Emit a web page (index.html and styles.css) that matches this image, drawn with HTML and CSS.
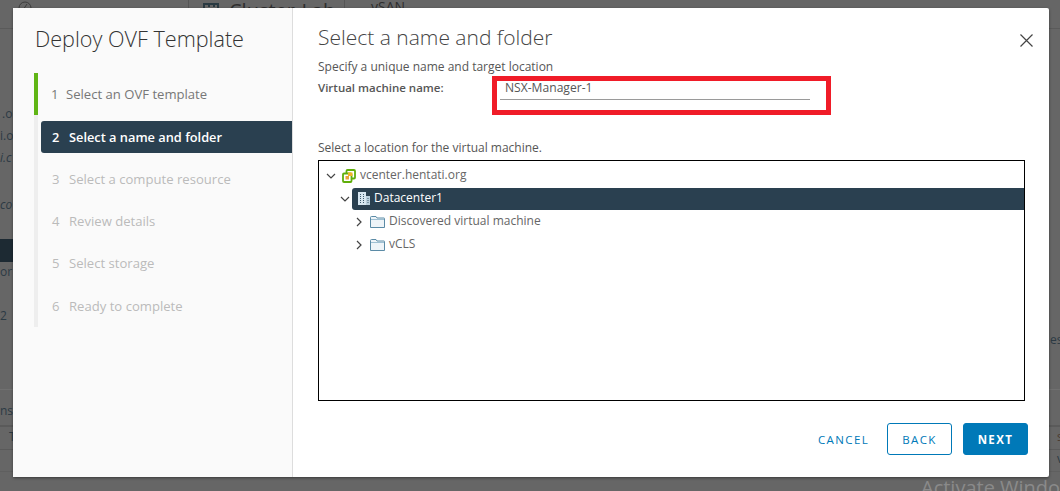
FILE: index.html
```html
<!DOCTYPE html>
<html lang="en">
<head>
<meta charset="utf-8">
<title>Deploy OVF Template</title>
<link rel="stylesheet" href="styles.css">
</head>
<body>
<div class="backdrop">
  <div class="bg-line bg-line-top"></div>
  <div class="bg-vline v1"></div>
  <div class="bg-vline v2"></div>
  <svg class="bg-globe" width="14" height="10" viewBox="0 0 14 10"><path d="M1 7a6 6 0 1 1 12 0M5 9l4-6" fill="none" stroke="#3d3d3d"/></svg>
  <svg class="bg-building" width="16" height="6" viewBox="0 0 16 6"><path d="M1 6V1h14v5M5 3h2M10 3h2" fill="none" stroke="#2a3a42" stroke-width="2"/></svg>
  <span class="bg-title">Cluster-Lab</span>
  <span class="bg-title-b">vSAN</span>
  <span class="bg-frag f1">.or</span>
  <span class="bg-frag f2">i.o</span>
  <span class="bg-frag f3">i.c</span>
  <span class="bg-frag f4">co</span>
  <div class="bg-dark"></div>
  <span class="bg-frag f5">or</span>
  <span class="bg-frag f6">2</span>
  <span class="bg-frag f7">ns</span>
  <span class="bg-frag f8">T</span>
  <div class="bg-line bg-line-a"></div>
  <div class="bg-line bg-line-b"></div>
  <div class="bg-line bg-line-c"></div>
  <div class="bg-line bg-line-d"></div>
  <span class="bg-frag f9">es</span>
  <span class="bg-frag f10">s</span>
  <span class="bg-frag f11">v</span>
  <span class="activate">Activate Windows</span>
</div>

<main class="modal">
  <aside class="sidebar">
    <h1 class="wizard-title">Deploy OVF Template</h1>
    <ol class="steps">
      <li class="step done"><span class="num">1</span><span>Select an OVF template</span></li>
      <li class="step active"><span class="num">2</span><span>Select a name and folder</span></li>
      <li class="step"><span class="num">3</span><span>Select a compute resource</span></li>
      <li class="step"><span class="num">4</span><span>Review details</span></li>
      <li class="step"><span class="num">5</span><span>Select storage</span></li>
      <li class="step"><span class="num">6</span><span>Ready to complete</span></li>
    </ol>
  </aside>
  <section class="content">
    <header class="content-head">
      <h2 class="content-title">Select a name and folder</h2>
      <button class="close" aria-label="Close">
        <svg width="13" height="13" viewBox="0 0 13 13"><path d="M.5.5l12 12M12.5.5l-12 12" stroke="#444" stroke-width="1.2" fill="none"/></svg>
      </button>
    </header>
    <p class="lead">Specify a unique name and target location</p>
    <div class="name-row">
      <label class="name-label">Virtual machine name:</label>
      <div class="name-field">
        <div class="name-value">NSX-Manager-1</div>
      </div>
      <div class="highlight"></div>
    </div>
    <p class="location">Select a location for the virtual machine.</p>
    <div class="tree">
      <div class="node lvl0">
        <svg class="chev" width="10" height="10" viewBox="0 0 10 10"><path d="M1 3l4 4 4-4" fill="none" stroke="#444" stroke-width="1.2"/></svg>
        <svg class="ico" width="14" height="14" viewBox="0 0 14 14"><rect x="4.5" y="1" width="8.5" height="8.5" rx="1" fill="#fff" stroke="#5fae0a" stroke-width="1.8"/><rect x="1" y="4.5" width="8.5" height="8.5" rx="1" fill="#fff" stroke="#5fae0a" stroke-width="1.8"/><rect x="6" y="3.5" width="4.5" height="3.5" fill="#f0b429"/><rect x="3.5" y="7" width="3.5" height="3.5" fill="#e8a33a"/></svg>
        <span class="node-text">vcenter.hentati.org</span>
      </div>
      <div class="node lvl1">
        <svg class="chev" width="10" height="10" viewBox="0 0 10 10"><path d="M1 3l4 4 4-4" fill="none" stroke="#444" stroke-width="1.2"/></svg>
        <div class="selected">
          <svg class="ico" width="12" height="13" viewBox="0 0 12 13"><rect x="0" y="0" width="8" height="13" fill="#d7e6f0"/><rect x="8" y="4" width="4" height="9" fill="#b9cfdd"/><path d="M2 2.5h1M5 2.5h1M2 4.5h1M5 4.5h1M2 6.5h1M5 6.5h1M2 8.5h1M5 8.5h1M2 10.5h1M5 10.5h1M9.5 6.5h1M9.5 8.5h1M9.5 10.5h1" stroke="#3d5a6c"/></svg>
          <span class="node-text">Datacenter1</span>
        </div>
      </div>
      <div class="node lvl2">
        <svg class="chev" width="10" height="10" viewBox="0 0 10 10"><path d="M3 1l4 4-4 4" fill="none" stroke="#444" stroke-width="1.2"/></svg>
        <svg class="ico" width="15" height="12" viewBox="0 0 15 12"><path d="M.5 11.5V1.5a1 1 0 0 1 1-1H6l1 1.5h7a.5.5 0 0 1 .5.5v9z" fill="#eef4f8" stroke="#5b8ba6"/><path d="M1 3.5h13" stroke="#9fc0d3"/></svg>
        <span class="node-text">Discovered virtual machine</span>
      </div>
      <div class="node lvl2">
        <svg class="chev" width="10" height="10" viewBox="0 0 10 10"><path d="M3 1l4 4-4 4" fill="none" stroke="#444" stroke-width="1.2"/></svg>
        <svg class="ico" width="15" height="12" viewBox="0 0 15 12"><path d="M.5 11.5V1.5a1 1 0 0 1 1-1H6l1 1.5h7a.5.5 0 0 1 .5.5v9z" fill="#eef4f8" stroke="#5b8ba6"/><path d="M1 3.5h13" stroke="#9fc0d3"/></svg>
        <span class="node-text">vCLS</span>
      </div>
    </div>
    <footer class="actions">
      <button class="btn btn-link">CANCEL</button>
      <button class="btn btn-outline">BACK</button>
      <button class="btn btn-primary">NEXT</button>
    </footer>
  </section>
</main>
</body>
</html>
```

FILE: styles.css
```css
* { box-sizing: border-box; }
html, body { margin: 0; height: 100%; }
body {
  width: 1060px;
  height: 491px;
  overflow: hidden;
  position: relative;
  background: #666;
  font-family: "Open Sans", "Liberation Sans", sans-serif;
  display: flex;
  align-items: flex-start;
  padding: 8px 11px 0 13px;
}
.backdrop { position: absolute; inset: 0; overflow: hidden; }
.bg-line { position: absolute; left: 0; right: 0; height: 1px; background: #5a5a5a; }
.bg-line-top { top: 28px; }
.bg-line-a { top: 389px; background: #707070; }
.bg-line-b { top: 425px; height: 2px; background: #5a5a5a; }
.bg-line-c { top: 449px; background: #5a5a5a; }
.bg-line-d { top: 471px; background: #5f5f5f; }
.bg-vline { position: absolute; top: 0; width: 1px; height: 8px; background: #555; }
.v1 { left: 188px; }
.v2 { left: 344px; }
.bg-globe { position: absolute; left: 18px; top: 1px; }
.bg-building { position: absolute; left: 203px; top: 3px; }
.bg-title { position: absolute; left: 229px; top: -3px; font-size: 20px; color: #2e2e2e; }
.bg-title-b { position: absolute; left: 371px; top: -3px; font-size: 14px; color: #2e2e2e; }
.bg-frag { position: absolute; font-size: 12px; line-height: 16px; color: #2c3a44; }
.f1 { left: 2px; top: 106px; }
.f2 { left: 0; top: 128px; }
.f3 { left: 0; top: 150px; font-style: italic; }
.f4 { left: 0; top: 197px; font-style: italic; }
.f5 { left: 0; top: 264px; }
.f6 { left: 0; top: 308px; }
.f7 { left: 0; top: 403px; }
.f8 { left: 9px; top: 429px; }
.f9 { left: 1050px; top: 332px; }
.f10 { left: 1057px; top: 429px; color: #4a3a30; }
.f11 { left: 1057px; top: 451px; }
.bg-dark { position: absolute; left: 0; top: 239px; width: 13px; height: 23px; background: #1d2a33; }
.activate {
  position: absolute;
  left: 921px;
  top: 474px;
  font-size: 20px;
  color: #8a8a8a;
  white-space: nowrap;
}

.modal {
  position: relative;
  width: 1036px;
  height: 469px;
  display: flex;
  background: #fff;
  border-radius: 2px;
  box-shadow: 0 1px 3px rgba(0, 0, 0, .45);
  color: #565656;
}
.sidebar {
  width: 280px;
  flex: none;
  background: #fafafa;
  border-right: 1px solid #ddd;
  padding: 17px 0 0 21px;
}
.wizard-title {
  margin: 0 0 20px 1px;
  font-size: 21.6px;
  line-height: 28px;
  font-weight: 300;
  color: #333;
  white-space: nowrap;
}
.steps {
  list-style: none;
  margin: 0;
  padding: 0;
  width: 258px;
  border-left: 4px solid #eee;
}
.step {
  height: 42.2px;
  display: flex;
  align-items: center;
  padding-left: 14px;
  font-size: 13.1px;
  color: #bbb;
  white-space: nowrap;
}
.step .num { width: 17px; flex: none; }
.step.done { color: #777; box-shadow: -4px 0 0 #60b515; height: 42px; padding-left: 13px; }
.step.done .num { width: 15px; }
.step.active {
  height: 32px;
  margin: 6px 0 5px 3px;
  padding-left: 11px;
  background: #2a4050;
  color: #fff;
  font-size: 12.8px;
  font-weight: 600;
  border-radius: 3px 0 0 3px;
}
.content {
  flex: 1;
  min-width: 0;
  display: flex;
  flex-direction: column;
  padding: 16px 21px 22px 25px;
}
.content-head { display: flex; justify-content: space-between; align-items: flex-start; height: 28px; }
.content-title { margin: -1px 0 0; font-size: 21px; line-height: 28px; font-weight: 300; color: #444; }
.close { margin: 10px -5px 0 0; padding: 0; border: 0; background: none; line-height: 0; }
.lead { margin: 6px 0 0; font-size: 12px; line-height: 17px; color: #565656; }
.name-row { position: relative; display: flex; height: 64px; margin-top: 0; padding-top: 1px; }
.name-label { width: 182px; margin-top: 3px; font-size: 11.5px; line-height: 18px; font-weight: 600; color: #565656; white-space: nowrap; }
.name-field { width: 310px; height: 21px; margin-top: 3px; border-bottom: 1px solid #9a9a9a; padding-left: 5px; font-size: 12.1px; line-height: 18px; color: #565656; }
.highlight {
  position: absolute;
  left: 174px;
  top: 1px;
  width: 339px;
  height: 39px;
  border: 5px solid #f01c28;
  pointer-events: none;
}
.location { margin: 0; font-size: 12px; line-height: 17px; color: #565656; }
.tree {
  margin-top: 4px;
  width: 707px;
  height: 241px;
  border: 1px solid #000;
  padding-top: 3px;
  background: #fff;
}
.node { display: flex; align-items: center; height: 23px; font-size: 12px; line-height: 16px; color: #666; }
.node-text { position: relative; top: -0.5px; }
.lvl0 { padding-left: 7px; }
.lvl1 { padding-left: 21px; }
.lvl2 { padding-left: 35px; }
.chev { flex: none; margin-right: 6px; }
.ico { flex: none; margin-right: 4px; }
.lvl1 .chev { margin-right: 2px; }
.selected {
  flex: 1;
  height: 22px;
  display: flex;
  align-items: center;
  padding-left: 6px;
  background: #2a4050;
  border-radius: 3px 0 0 3px;
  color: #fff;
}
.actions { display: flex; justify-content: flex-end; align-items: center; gap: 11px; margin-top: 22px; }
.btn {
  height: 32px;
  width: 65px;
  border-radius: 3px;
  font-family: inherit;
  font-size: 11.5px;
  font-weight: 400;
  letter-spacing: 1.4px;
  padding: 0;
}
.btn-link { border: 0; background: none; color: #0079b8; }
.btn-outline { border: 1px solid #0079b8; background: #fff; color: #0079b8; }
.btn-primary { border: 1px solid #0079b8; background: #0079b8; color: #fff; font-weight: 700; }
```
